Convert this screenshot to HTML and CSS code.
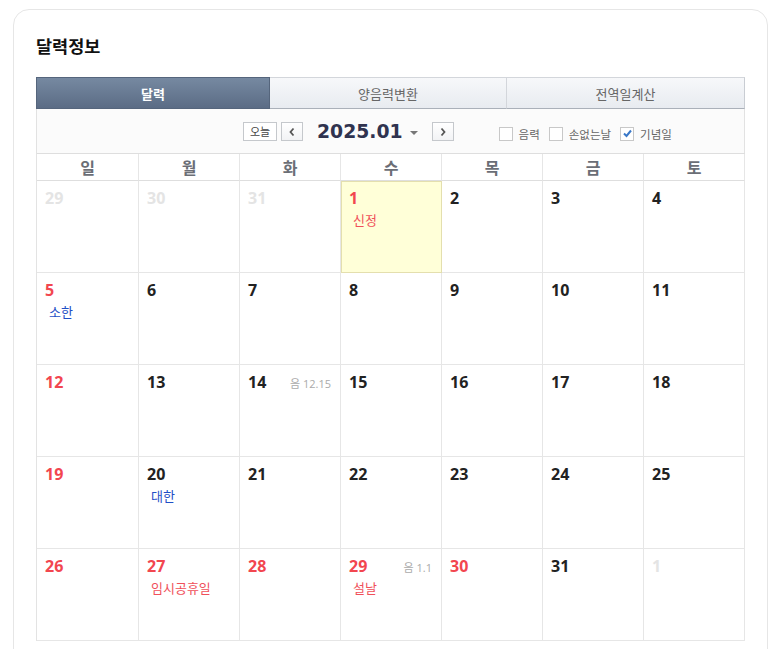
FILE: index.html
```html
<!DOCTYPE html>
<html lang="ko">
<head>
<meta charset="utf-8">
<title>달력정보</title>
<link rel="stylesheet" href="styles.css">
</head>
<body>
<div class="card">
  <h2 class="title">달력정보</h2>
  <div class="tabs">
    <div class="tab active">달력</div>
    <div class="tab">양음력변환</div>
    <div class="tab">전역일계산</div>
  </div>
  <div class="toolbar">
    <button class="btn today-btn">오늘</button>
    <button class="btn arrow-btn" aria-label="이전">
      <svg width="8" height="10" viewBox="0 0 8 10"><path d="M5.5 1.5 L2.5 5 L5.5 8.5" fill="none" stroke="#555" stroke-width="1.8"/></svg>
    </button>
    <span class="month">2025.01</span>
    <span class="caret"></span>
    <button class="btn arrow-btn" aria-label="다음">
      <svg width="8" height="10" viewBox="0 0 8 10"><path d="M2.5 1.5 L5.5 5 L2.5 8.5" fill="none" stroke="#555" stroke-width="1.8"/></svg>
    </button>
    <div class="checks">
      <label class="chk"><span class="box"></span>음력</label>
      <label class="chk"><span class="box"></span>손없는날</label>
      <label class="chk"><span class="box checked"><svg width="11" height="11" viewBox="0 0 11 11"><path d="M2 5.5 L4.5 8 L9 2.5" fill="none" stroke="#3a78c8" stroke-width="2"/></svg></span>기념일</label>
    </div>
  </div>
  <div class="calendar">
    <div class="dow">일</div><div class="dow">월</div><div class="dow">화</div><div class="dow">수</div><div class="dow">목</div><div class="dow">금</div><div class="dow">토</div>

    <div class="cell"><span class="num other">29</span></div>
    <div class="cell"><span class="num other">30</span></div>
    <div class="cell"><span class="num other">31</span></div>
    <div class="cell today"><span class="num red">1</span><div class="evt red">신정</div></div>
    <div class="cell"><span class="num">2</span></div>
    <div class="cell"><span class="num">3</span></div>
    <div class="cell"><span class="num">4</span></div>

    <div class="cell"><span class="num red">5</span><div class="evt blue">소한</div></div>
    <div class="cell"><span class="num">6</span></div>
    <div class="cell"><span class="num">7</span></div>
    <div class="cell"><span class="num">8</span></div>
    <div class="cell"><span class="num">9</span></div>
    <div class="cell"><span class="num">10</span></div>
    <div class="cell"><span class="num">11</span></div>

    <div class="cell"><span class="num red">12</span></div>
    <div class="cell"><span class="num">13</span></div>
    <div class="cell"><span class="num">14</span><span class="lunar">음 12.15</span></div>
    <div class="cell"><span class="num">15</span></div>
    <div class="cell"><span class="num">16</span></div>
    <div class="cell"><span class="num">17</span></div>
    <div class="cell"><span class="num">18</span></div>

    <div class="cell"><span class="num red">19</span></div>
    <div class="cell"><span class="num">20</span><div class="evt blue">대한</div></div>
    <div class="cell"><span class="num">21</span></div>
    <div class="cell"><span class="num">22</span></div>
    <div class="cell"><span class="num">23</span></div>
    <div class="cell"><span class="num">24</span></div>
    <div class="cell"><span class="num">25</span></div>

    <div class="cell"><span class="num red">26</span></div>
    <div class="cell"><span class="num red">27</span><div class="evt red">임시공휴일</div></div>
    <div class="cell"><span class="num red">28</span></div>
    <div class="cell"><span class="num red">29</span><span class="lunar">음 1.1</span><div class="evt red">설날</div></div>
    <div class="cell"><span class="num red">30</span></div>
    <div class="cell"><span class="num">31</span></div>
    <div class="cell"><span class="num other">1</span></div>
  </div>
</div>
</body>
</html>
```
FILE: styles.css
```css
* { box-sizing: border-box; }
html, body { margin: 0; padding: 0; background: #fff; }
body {
  font-family: "Open Sans", "Noto Sans CJK KR", sans-serif;
  color: #222;
  overflow: hidden;
}
.card {
  margin: 9px 0 0 13px;
  width: 755px;
  min-height: 720px;
  border: 1px solid #e6e6e6;
  border-radius: 16px;
  padding: 24px 21px 0 22px;
}
.title {
  margin: 0 0 19px;
  font-family: "Noto Sans CJK KR", sans-serif;
  font-size: 17.5px;
  line-height: 24px;
  font-weight: 700;
  color: #111;
}
.tabs {
  display: flex;
  width: 709px;
  height: 32px;
}
.tab {
  flex: 1;
  display: flex;
  align-items: center;
  justify-content: center;
  font-family: "Noto Sans CJK KR", sans-serif;
  font-size: 13px;
  color: #666;
  background: linear-gradient(#f7f8fa, #e8ebf0);
  border-top: 1px solid #d3d6db;
  border-bottom: 1px solid #aab0b9;
  border-right: 1px solid #d3d6db;
}
.tab:last-child { border-right: 1px solid #c9cdd3; }
.tab.active {
  flex: 0 0 234px;
  color: #fff;
  font-weight: 700;
  background: linear-gradient(#7689a1, #5b6c85);
  border: 1px solid #55657c;
}
.tab:nth-child(2) { flex: 0 0 237px; }
.toolbar {
  width: 709px;
  height: 44px;
  background: #fbfbfb;
  border-left: 1px solid #e2e2e2;
  border-right: 1px solid #e2e2e2;
  display: flex;
  align-items: center;
  padding-left: 206px;
  padding-top: 1px;
}
.btn {
  height: 19px;
  margin: 0;
  padding: 0;
  border: 1px solid #c5c8cc;
  background: linear-gradient(#fff, #f2f3f5);
  display: flex;
  align-items: center;
  justify-content: center;
  font-family: "Noto Sans CJK KR", sans-serif;
  font-size: 11px;
  color: #444;
  line-height: 1;
}
.today-btn { width: 34px; margin-right: 4px; background: #fff; }
.arrow-btn { width: 22px; }
.month {
  margin-left: 14px;
  font-family: "DejaVu Sans", sans-serif;
  font-weight: 700;
  font-size: 18.8px;
  color: #30334f;
  line-height: 20px;
}
.caret {
  width: 0; height: 0;
  margin: 2px 14px 0 7px;
  border-left: 4px solid transparent;
  border-right: 4px solid transparent;
  border-top: 4px solid #777;
}
.checks {
  display: flex;
  align-items: center;
  margin-left: 45px;
  margin-top: 4px;
  gap: 9px;
}
.chk {
  display: flex;
  align-items: center;
  font-family: "Noto Sans CJK KR", sans-serif;
  font-size: 11.5px;
  color: #666;
}
.box {
  width: 14px; height: 14px;
  border: 1px solid #c8c8c8;
  background: #fff;
  margin-right: 6px;
  display: flex;
  align-items: center;
  justify-content: center;
}
.calendar {
  width: 709px;
  display: grid;
  grid-template-columns: 102px repeat(6, 101px);
  grid-template-rows: 27px repeat(5, 92px);
  border-top: 1px solid #dedede;
  border-left: 1px solid #e3e3e3;
}
.dow {
  border-right: 1px solid #e6e6e6;
  border-bottom: 1px solid #dedede;
  display: flex;
  align-items: center;
  justify-content: center;
  font-family: "Noto Sans CJK KR", sans-serif;
  font-size: 16px;
  font-weight: 700;
  color: #6b6e76;
}
.cell {
  position: relative;
  border-right: 1px solid #e6e6e6;
  border-bottom: 1px solid #e6e6e6;
  padding: 6px 8px 0 8px;
}
.cell.today {
  background: #ffffd8;
  box-shadow: inset 1px 1px 0 #e4dfae;
  border-right-color: #e4dfae;
  border-bottom-color: #e4dfae;
}
.num {
  display: inline-block;
  font-size: 16px;
  font-weight: 700;
  line-height: 22px;
  color: #222;
}
.num.red { color: #f2464f; }
.num.other { color: #e4e4e4; }
.lunar {
  position: absolute;
  top: 10px;
  right: 9px;
  font-size: 11px;
  color: #aaa;
  font-family: "Open Sans", "Noto Sans CJK KR", sans-serif;
}
.evt {
  margin: 2px 0 0 4px;
  font-family: "Noto Sans CJK KR", sans-serif;
  font-size: 13px;
  line-height: 18px;
}
.evt.red { color: #f0505a; }
.evt.blue { color: #1f4fc6; }
```
